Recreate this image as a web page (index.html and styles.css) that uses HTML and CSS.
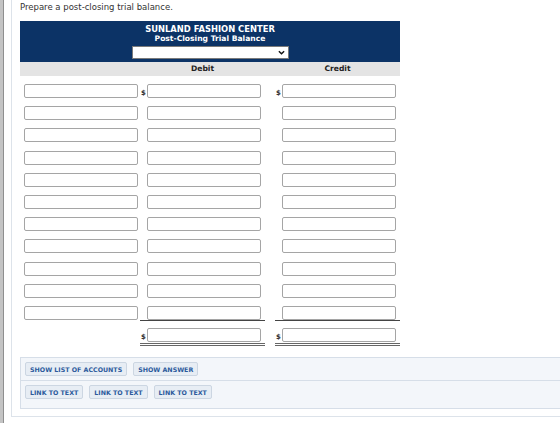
FILE: index.html
```html
<!DOCTYPE html>
<html lang="en">
<head>
    <meta charset="UTF-8">
    <meta name="viewport" content="width=device-width, initial-scale=1.0">
    <title>Post-Closing Trial Balance</title>
    <link rel="stylesheet" href="styles.css">
</head>
<body>
    <div class="frame">
        <div class="card">
            <p class="prompt">Prepare a post-closing trial balance.</p>

            <div class="sheet">
                <div class="sheet-head">
                    <div class="company">SUNLAND FASHION CENTER</div>
                    <div class="statement">Post-Closing Trial Balance</div>
                    <div class="date-pick">
                        <select></select>
                        <svg class="chevron" viewBox="0 0 8 5" width="7" height="5">
                            <path d="M1 1l3 3 3-3" />
                        </svg>
                    </div>
                </div>
                <div class="cols">
                    <span></span>
                    <span>Debit</span>
                    <span>Credit</span>
                </div>

                <div class="lines">
                    <div class="row">
                        <div class="acct"><input type="text"></div>
                        <div class="amt"><span class="cur">$</span><input type="text"></div>
                        <div class="amt"><span class="cur">$</span><input type="text"></div>
                    </div>
                    <div class="row">
                        <div class="acct"><input type="text"></div>
                        <div class="amt"><span class="cur"></span><input type="text"></div>
                        <div class="amt"><span class="cur"></span><input type="text"></div>
                    </div>
                    <div class="row">
                        <div class="acct"><input type="text"></div>
                        <div class="amt"><span class="cur"></span><input type="text"></div>
                        <div class="amt"><span class="cur"></span><input type="text"></div>
                    </div>
                    <div class="row">
                        <div class="acct"><input type="text"></div>
                        <div class="amt"><span class="cur"></span><input type="text"></div>
                        <div class="amt"><span class="cur"></span><input type="text"></div>
                    </div>
                    <div class="row">
                        <div class="acct"><input type="text"></div>
                        <div class="amt"><span class="cur"></span><input type="text"></div>
                        <div class="amt"><span class="cur"></span><input type="text"></div>
                    </div>
                    <div class="row">
                        <div class="acct"><input type="text"></div>
                        <div class="amt"><span class="cur"></span><input type="text"></div>
                        <div class="amt"><span class="cur"></span><input type="text"></div>
                    </div>
                    <div class="row">
                        <div class="acct"><input type="text"></div>
                        <div class="amt"><span class="cur"></span><input type="text"></div>
                        <div class="amt"><span class="cur"></span><input type="text"></div>
                    </div>
                    <div class="row">
                        <div class="acct"><input type="text"></div>
                        <div class="amt"><span class="cur"></span><input type="text"></div>
                        <div class="amt"><span class="cur"></span><input type="text"></div>
                    </div>
                    <div class="row">
                        <div class="acct"><input type="text"></div>
                        <div class="amt"><span class="cur"></span><input type="text"></div>
                        <div class="amt"><span class="cur"></span><input type="text"></div>
                    </div>
                    <div class="row">
                        <div class="acct"><input type="text"></div>
                        <div class="amt"><span class="cur"></span><input type="text"></div>
                        <div class="amt"><span class="cur"></span><input type="text"></div>
                    </div>
                    <div class="row last">
                        <div class="acct"><input type="text"></div>
                        <div class="amt"><span class="cur"></span><input type="text"></div>
                        <div class="amt"><span class="cur"></span><input type="text"></div>
                    </div>
                    <div class="row total">
                        <div class="acct"></div>
                        <div class="amt"><span class="cur">$</span><input type="text"></div>
                        <div class="amt"><span class="cur">$</span><input type="text"></div>
                    </div>
                </div>
            </div>

            <div class="tools">
                <div class="tool-row">
                    <button class="tool-btn">Show List of Accounts</button>
                    <button class="tool-btn">Show Answer</button>
                </div>
                <div class="tool-row">
                    <button class="tool-btn">Link to Text</button>
                    <button class="tool-btn">Link to Text</button>
                    <button class="tool-btn">Link to Text</button>
                </div>
            </div>
        </div>
    </div>
</body>
</html>
```

FILE: styles.css
```css
html, body {
    margin: 0;
    height: 100%;
    overflow: hidden;
    background-color: white;
    font-family: "DejaVu Sans", Verdana, sans-serif;
    color: #222;
}
.frame {
    position: relative;
    height: 100%;
    border-left: 3px solid #c4c4c4;
}
.frame::before {
    content: "";
    position: absolute;
    top: 0;
    bottom: 0;
    left: 0;
    width: 1px;
    background-color: #8f8f8f;
}
.card {
    margin-left: 8px;
    border-left: 1px solid #dde3ea;
    border-bottom: 1px solid #dde3ea;
    padding: 0 0 7px 8px;
}
.prompt {
    margin: 0;
    padding-top: 2px;
    font-size: 8.5px;
    line-height: 10px;
    color: #333;
}

/* trial balance sheet */
.sheet {
    width: 380px;
    margin-top: 9px;
}
.sheet-head {
    background-color: #0c3366;
    color: white;
    font-weight: bold;
    text-align: center;
    padding-top: 3px;
    height: 41px;
    box-sizing: border-box;
}
.company {
    font-size: 8.4px;
    line-height: 10px;
}
.statement {
    font-size: 7.6px;
    line-height: 10px;
}
.date-pick {
    position: relative;
    width: 157px;
    height: 13px;
    margin: 2px auto 0;
}
.date-pick select {
    appearance: none;
    width: 100%;
    height: 100%;
    margin: 0;
    border: 1px solid #7a7a7a;
    border-radius: 0;
    background-color: white;
    display: block;
}
.chevron {
    position: absolute;
    right: 4px;
    top: 4px;
    fill: none;
    stroke: #111;
    stroke-width: 1.6;
}
.cols, .row {
    display: grid;
    grid-template-columns: 120px 125px 135px;
}
.cols > :last-child, .row > :last-child {
    margin-left: 10px;
}
.cols {
    background-color: #e4e4e4;
    height: 14px;
    font-size: 7.6px;
    font-weight: bold;
    line-height: 14px;
    text-align: center;
    color: #222;
}
.lines {
    padding-top: 8px;
}
.row {
    height: 22.2px;
    align-items: start;
}
.acct {
    padding-left: 4px;
}
.amt {
    display: flex;
    align-items: center;
}
.cur {
    width: 7px;
    flex-shrink: 0;
    font-size: 7px;
    font-weight: bold;
    text-align: center;
    padding-top: 3px;
    color: #333;
}
.row input {
    width: 114px;
    height: 14px;
    box-sizing: border-box;
    margin: 0;
    padding: 0 2px;
    border: 1px solid #a5a5a5;
    border-radius: 2px;
    background-color: white;
    display: block;
}
.row.last .amt {
    border-bottom: 1px solid #444;
}
.row.total {
    height: auto;
}
.row.total .amt {
    padding-bottom: 1px;
    border-bottom: 3px double #666;
}

/* answer tools */
.tools {
    margin-top: 11px;
    border: 1px solid #d6dee8;
    border-right: none;
    background-color: #f3f6fa;
}
.tool-row {
    display: flex;
    gap: 6px;
    padding: 4px;
}
.tool-row + .tool-row {
    border-top: 1px solid #d6dee8;
    padding-bottom: 9px;
}
.tool-btn {
    height: 14px;
    padding: 0 4px;
    margin: 0;
    border: 1px solid #ccd6e2;
    border-radius: 2px;
    background-color: #e7edf4;
    color: #2c5a9c;
    font-family: "DejaVu Sans", Verdana, sans-serif;
    font-size: 6.3px;
    font-weight: bold;
    text-transform: uppercase;
    cursor: pointer;
}
```
